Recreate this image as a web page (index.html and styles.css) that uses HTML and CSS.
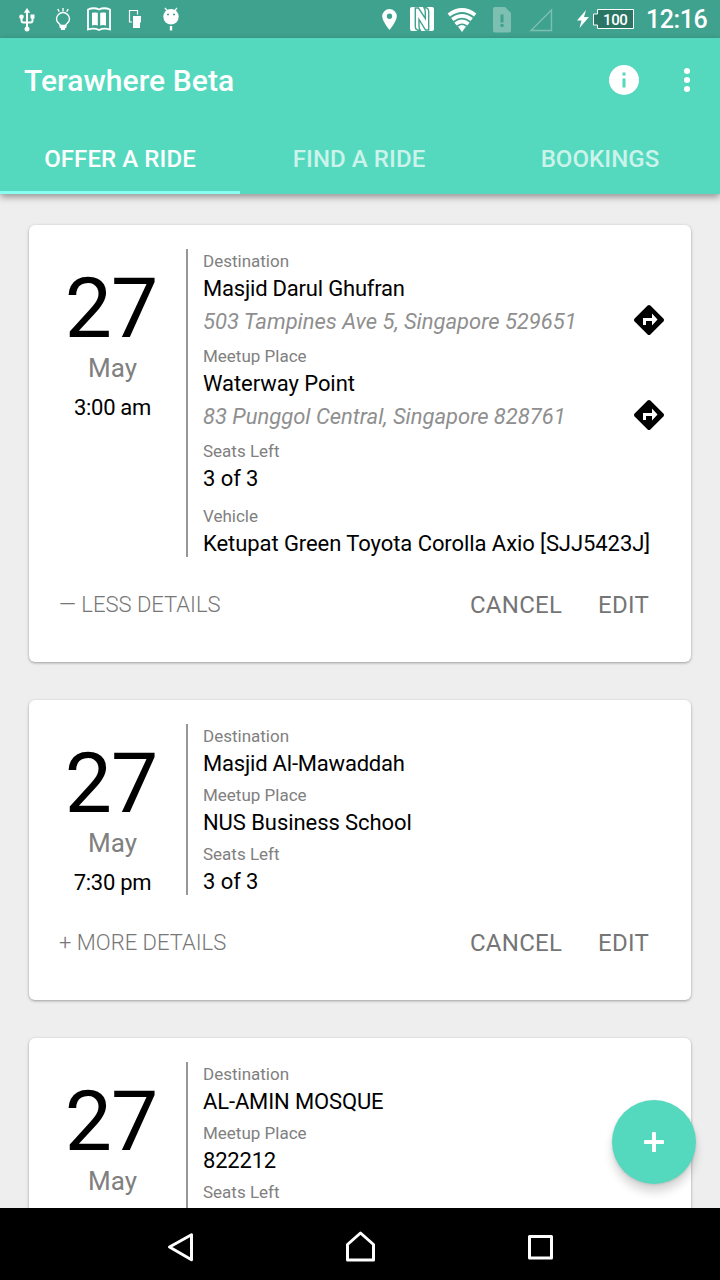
FILE: index.html
```html
<!DOCTYPE html>
<html lang="en">
<head>
<meta charset="utf-8">
<title>Terawhere Beta</title>
<link rel="stylesheet" href="styles.css">
</head>
<body>
<div class="screen">
  <div class="status-bar">
    <svg class="status-icons" width="190" height="38" viewBox="0 0 190 38" fill="none" stroke="#fff">
      <path d="M27 12v17M21.500 17v3.500q0 2 2 2h7q2 0 2-2v-4" stroke-width="2"/>
      <path d="M27 8l3.200 4.800h-6.400z" fill="#fff" stroke="none"/>
      <circle cx="27" cy="29" r="2.500" fill="#fff" stroke="none"/>
      <circle cx="21.500" cy="16.800" r="2.300" fill="#fff" stroke="none"/>
      <path d="M30.500 14.500h4v4h-4z" fill="#fff" stroke="none"/>
      <path d="M60.500 25.500c-.5-2-4-2.500-4-6.500a6.500 6.500 0 0 1 13 0c0 4-3.500 4.500-4 6.500z" stroke-width="1.400"/>
      <path d="M59.500 25h7v2.500l-1.500 1V30h-4v-1.500l-1.500-1z" fill="#fff" stroke="none"/>
      <path d="M63 8v3.500M57.700 9l1.600 2.700M68.300 9l-1.600 2.700" stroke-width="1.400"/>
      <path d="M88 9.500q6-2.500 11 0 5-2.500 11 0v20q-6-2-11 .5-5-2.500-11-.5z" stroke-width="1.800"/>
      <path d="M92 12.800q3-.800 5.800 0v12.700q-2.800-1-5.800 0zM100.200 12.800q3-.800 5.800 0v12.700q-2.800-1-5.800 0z" fill="#fff" stroke="none"/>
      <path d="M132 22h-2.500V10.500h8v4" stroke-width="1.200"/>
      <path d="M133 16h8v6l-1 1v5h-7z" fill="#fff" stroke="none"/>
      <circle cx="171" cy="16.800" r="7.700" fill="#fff" stroke="none"/>
      <path d="M165 8l2.500 3M177 8l-2.500 3" stroke-width="1.300"/>
      <path d="M171 26v4.500" stroke-width="2.400"/>
      <path d="M167 14.500h2M173 14.500h2" stroke="#3fa28e" stroke-width="1.500"/>
    </svg>
    <svg class="status-icons" width="270" height="38" viewBox="370 0 270 38" fill="#fff">
      <path fill-rule="evenodd" d="M389.500 9a7.300 7.300 0 0 0-7.300 7.300c0 5.200 7.300 13.700 7.300 13.700s7.300-8.500 7.300-13.700A7.300 7.300 0 0 0 389.500 9zm0 4.600a2.700 2.700 0 1 1 0 5.400 2.700 2.700 0 0 1 0-5.400z"/>
      <rect x="410" y="7" width="24" height="24" rx="2"/>
      <path d="M415.300 8h3.200l6.800 10.500V12q0-2.500-1.300-4.500 4.700 0 4.700 4V30h-3.200l-6.500-10.500V26q0 2.500 1.300 4.500-5 0-5-4z" fill="#fff" stroke="#3fa28e" stroke-width="1.400"/>
      <path d="M462 32l-4-5.500q4-3 8 0z"/>
      <path d="M455.500 24q6.500-5 13 0M452.300 19.600q9.700-7.500 19.400 0M448.800 15q13.200-10 26.400 0" fill="none" stroke="#fff" stroke-width="3.800"/>
      <path d="M495 7h10l6 6v17.500q0 2-2 2h-14q-2 0-2-2V9q0-2 2-2z" fill="#7dbfb1"/>
      <path d="M500.500 14.500h3v8h-3zM500.500 24h3v3h-3z" fill="#3fa28e"/>
      <path d="M531 30.500h20.500V10z" fill="none" stroke="#7dbfb1" stroke-width="1.400"/>
      <path d="M586 10l-9 10.500h4.500L579.500 28l9.500-11h-5z"/>
      <path d="M597.500 9.500h36v19h-36v-3.500h-4V14h4z" fill="#2b7565" stroke="#fff" stroke-width="1"/>
      <text class="battery-level" x="603" y="25">100</text>
    </svg>
    <span class="clock">12:16</span>
  </div>
  <header class="app-header">
    <div class="toolbar">
      <h1 class="title">Terawhere Beta</h1>
      <svg class="info" width="30" height="30" viewBox="0 0 30 30"><circle cx="15" cy="15" r="15" fill="#fff"/><path d="M13.500 7.500h3v3h-3zM13.500 13.500h3v9h-3z" fill="#54d9be"/></svg>
      <svg class="more" width="6" height="26" viewBox="0 0 6 26" fill="#fff"><circle cx="3" cy="4" r="3.100"/><circle cx="3" cy="13" r="3.100"/><circle cx="3" cy="22" r="3.100"/></svg>
    </div>
    <nav class="tabs">
      <div class="tab active">OFFER A RIDE</div>
      <div class="tab find">FIND A RIDE</div>
      <div class="tab">BOOKINGS</div>
    </nav>
  </header>
  <main class="list">
    <article class="card">
      <div class="card-body">
        <div class="date"><div class="day">27</div><div class="month">May</div><div class="time">3:00 am</div></div>
        <div class="details">
          <div class="field"><div class="label">Destination</div><div class="value tighter">Masjid Darul Ghufran</div>
            <div class="address"><span>503 Tampines Ave 5, Singapore 529651</span><svg width="30" height="30" viewBox="0 0 30 30"><path d="M13.600.600q1.400-1.200 2.800 0l13 13q1.200 1.400 0 2.800l-13 13q-1.400 1.200-2.800 0l-13-13q-1.200-1.400 0-2.800z"/><path d="M9 20v-7h9V8.500l5.500 6-5.500 6V16h-6v4z" fill="#fff"/></svg></div></div>
          <div class="field"><div class="label">Meetup Place</div><div class="value">Waterway Point</div>
            <div class="address"><span>83 Punggol Central, Singapore 828761</span><svg width="30" height="30" viewBox="0 0 30 30"><path d="M13.600.600q1.400-1.200 2.800 0l13 13q1.200 1.400 0 2.800l-13 13q-1.400 1.200-2.800 0l-13-13q-1.200-1.400 0-2.800z"/><path d="M9 20v-7h9V8.500l5.500 6-5.500 6V16h-6v4z" fill="#fff"/></svg></div></div>
          <div class="field seats-expanded"><div class="label">Seats Left</div><div class="value">3 of 3</div></div>
          <div class="field"><div class="label">Vehicle</div><div class="value">Ketupat Green Toyota Corolla Axio [SJJ5423J]</div></div>
        </div>
      </div>
      <div class="actions"><span class="toggle">— LESS DETAILS</span><span class="action">CANCEL</span><span class="action">EDIT</span></div>
    </article>
    <article class="card">
      <div class="card-body">
        <div class="date"><div class="day">27</div><div class="month">May</div><div class="time">7:30 pm</div></div>
        <div class="details">
          <div class="field"><div class="label">Destination</div><div class="value tighter">Masjid Al-Mawaddah</div></div>
          <div class="field"><div class="label">Meetup Place</div><div class="value">NUS Business School</div></div>
          <div class="field"><div class="label">Seats Left</div><div class="value">3 of 3</div></div>
        </div>
      </div>
      <div class="actions"><span class="toggle">+ MORE DETAILS</span><span class="action">CANCEL</span><span class="action">EDIT</span></div>
    </article>
    <article class="card">
      <div class="card-body">
        <div class="date"><div class="day">27</div><div class="month">May</div></div>
        <div class="details">
          <div class="field"><div class="label">Destination</div><div class="value tight">AL-AMIN MOSQUE</div></div>
          <div class="field"><div class="label">Meetup Place</div><div class="value tighter">822212</div></div>
          <div class="field"><div class="label">Seats Left</div><div class="value"></div></div>
        </div>
      </div>
    </article>
    <div class="fab"><svg width="20" height="20" viewBox="0 0 20 20"><path d="M10 1.500v17M1.500 10h17" stroke="#fff" stroke-width="4" stroke-linecap="round"/></svg></div>
  </main>
  <nav class="nav-bar">
    <div class="nav-item"><svg width="32" height="32" viewBox="0 0 32 32"><path d="M5.500 16L27.500 3.800v25z"/></svg></div>
    <div class="nav-item"><svg width="32" height="32" viewBox="0 0 32 32"><path d="M3.500 29V13.500L16.500 2 29.500 13.500V29z"/></svg></div>
    <div class="nav-item"><svg width="32" height="32" viewBox="0 0 32 32"><path d="M5.500 5.500h22v21.500h-22z"/></svg></div>
  </nav>
</div>
</body>
</html>
```
FILE: styles.css
```css
* { box-sizing: border-box; }
body { margin: 0; font-family: Roboto, "Noto Sans", sans-serif; background: #eee; color: #000; }
.screen { width: 720px; height: 1280px; display: flex; flex-direction: column; overflow: hidden; }
.status-bar { height: 38px; flex: none; display: flex; justify-content: space-between; background: #3fa28e; }
.status-icons { flex: none; }
.status-icons:nth-child(2) { margin-left: auto; }
.battery-level { font-size: 15px; font-weight: 500; letter-spacing: -.4px; }
.clock { width: 80px; padding-left: 6px; line-height: 40px; font-size: 25px; font-weight: 500; letter-spacing: -.4px; color: #fff; white-space: nowrap; }
.app-header { height: 156px; flex: none; background: #54d9be; box-shadow: 0 3px 7px rgba(0,0,0,.38); z-index: 1; }
.toolbar { height: 84px; display: flex; align-items: center; padding: 0 30px 0 24px; }
.title { margin: 0; flex: 1; font-size: 30px; line-height: 36px; font-weight: 500; letter-spacing: .07px; color: #fff; padding-top: 1px; }
.more { margin-left: 45px; }
.tabs { display: grid; grid-template-columns: repeat(3, 1fr); height: 72px; }
.tab { text-align: center; line-height: 74px; height: 72px; font-size: 24px; font-weight: 500; letter-spacing: .08px; color: #cbf3eb; border-bottom: 3px solid transparent; }
.tab.active { color: #fff; border-color: #88fff0; }
.tab.find { padding-right: 2px; }
.list { flex: 1; min-height: 0; overflow: hidden; padding: 31px 29px 0; position: relative; }
.card { background: #fff; border-radius: 6px; margin-bottom: 38px; padding: 24px 24px 0 0; box-shadow: 0 1px 3px rgba(0,0,0,.35); }
.card-body { display: flex; }
.date { width: 157px; padding-left: 10px; text-align: center; flex: none; }
.day { font-size: 84px; line-height: 84px; margin-top: 18px; letter-spacing: -1px; padding-right: 3px; }
.month { font-size: 26px; line-height: 30px; color: #808080; margin-top: 2px; }
.time { font-size: 22px; line-height: 24px; margin-top: 12px; padding-top: 1px; letter-spacing: -.3px; }
.details { flex: 1; border-left: 2px solid #979797; padding-left: 15px; }
.field { margin-bottom: 6px; }
.field:last-child { margin-bottom: 0; }
.seats-expanded { margin-bottom: 12px; }
.label { font-size: 17px; line-height: 24px; color: #808080; }
.value { font-size: 22px; line-height: 29px; height: 29px; padding-top: 1px; white-space: nowrap; letter-spacing: -.07px; }
.value.tight { letter-spacing: -.13px; }
.value.tighter { letter-spacing: -.2px; }
.address { display: flex; justify-content: space-between; align-items: center; height: 36px; font-size: 22px; font-style: italic; letter-spacing: -.02px; color: #8f8f8f; white-space: nowrap; padding-right: 3px; }
.address span { padding-top: 2px; }
.actions { display: flex; align-items: center; height: 105px; padding: 0 18px 9px 30px; }
.toggle { flex: 1; font-size: 22px; font-weight: 300; color: #777; padding-bottom: 2px; }
.action { font-size: 24px; letter-spacing: .25px; color: #757575; margin-left: 36px; }
.fab { position: absolute; right: 24px; bottom: 24px; width: 84px; height: 84px; border-radius: 50%; background: #54d9be; display: flex; align-items: center; justify-content: center; box-shadow: 0 8px 10px rgba(0,0,0,.16), 0 1px 3px rgba(0,0,0,.12); }
.nav-bar { height: 72px; flex: none; background: #000; display: flex; justify-content: center; align-items: center; padding-top: 5px; }
.nav-item { width: 180px; display: flex; justify-content: center; }
.nav-item path { fill: none; stroke: #fff; stroke-width: 3; stroke-linejoin: round; }
```
